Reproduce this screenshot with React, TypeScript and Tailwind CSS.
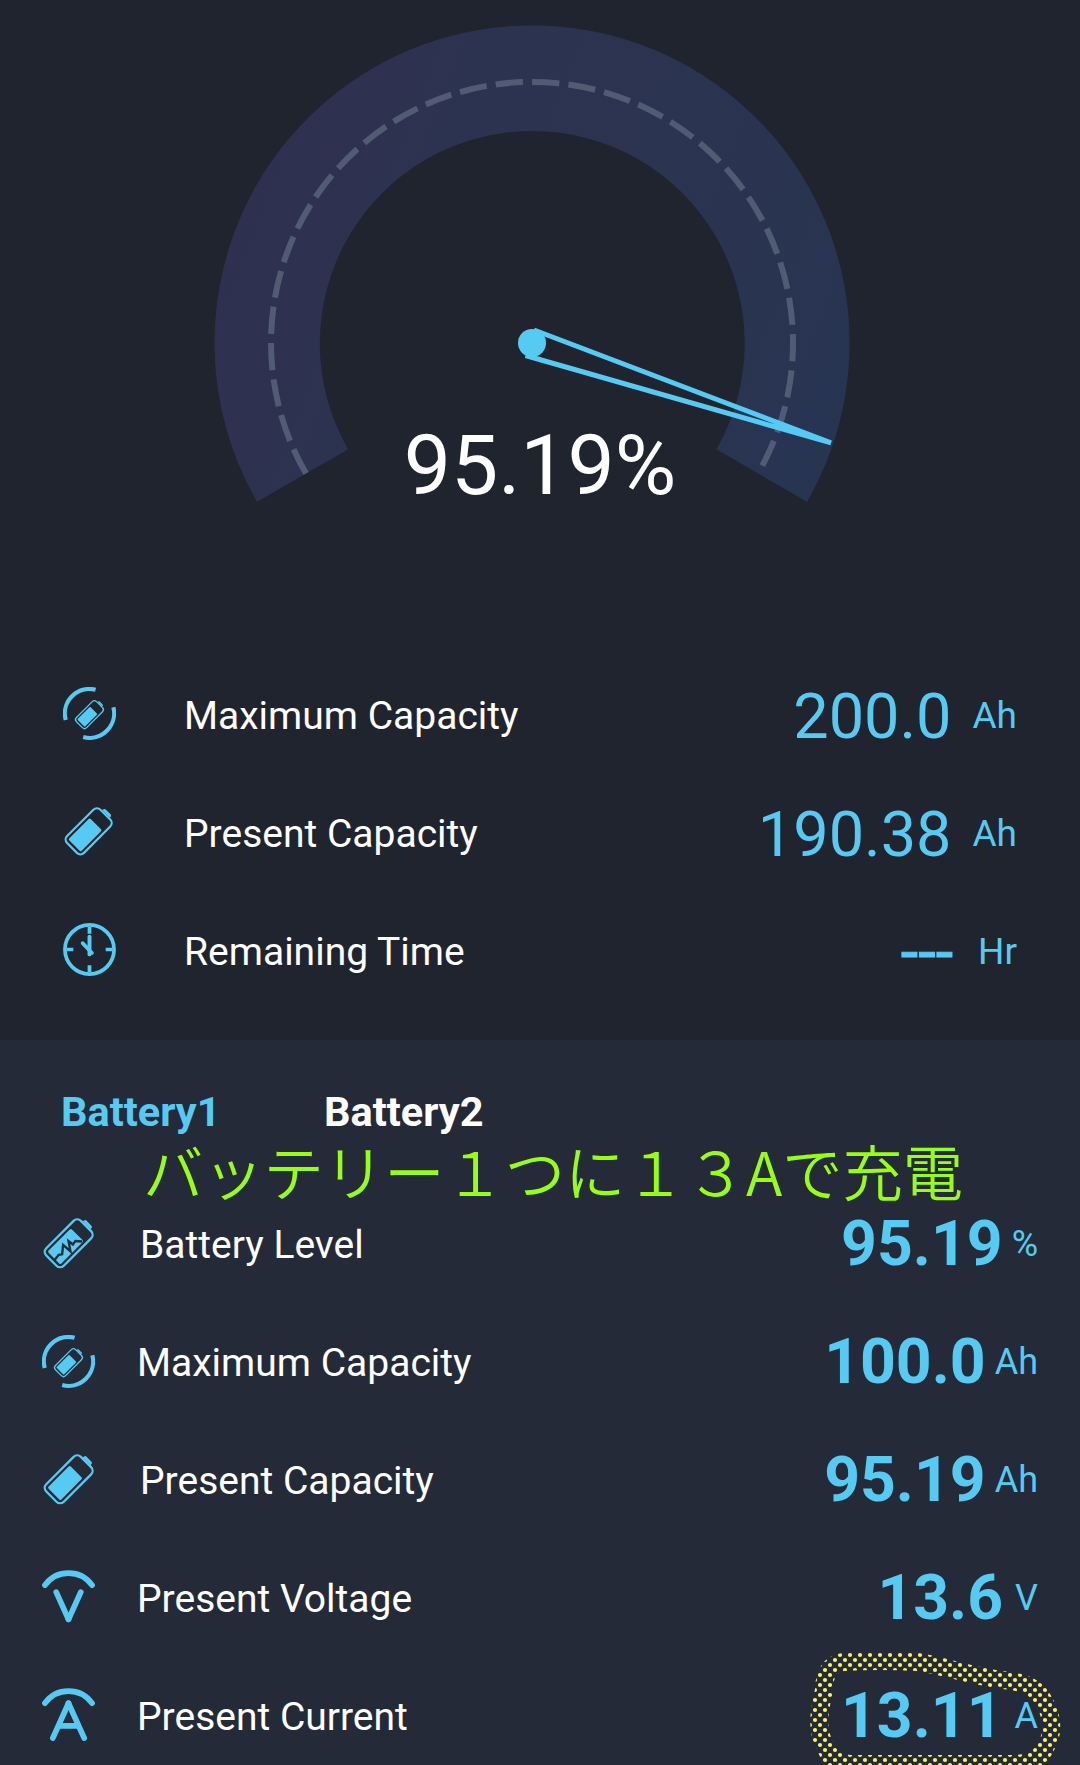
import React from 'react';

const BLUE = '#55cbf3';

function BatteryShape({ level = false }: { level?: boolean }) {
    return (
        <g transform="translate(27 27) rotate(45) scale(1.05)">
            <rect x="-12" y="-24" width="24" height="47.5" rx="5" fill="none" stroke={BLUE} strokeWidth="2.2" />
            <path d="M-5.5 -25 L-5 -27 Q-4.5 -28 -3.5 -28 H3.5 Q4.5 -28 5 -27 L5.5 -25 Z" fill={BLUE} />
            <rect x="-8.8" y={level ? -12 : -10.5} width="17.6" height={level ? 32 : 30.5} rx="1.5" fill={BLUE} />
        </g>
    );
}

function BatteryIcon({ size = 53 }: { size?: number }) {
    return (
        <svg width={size} height={size} viewBox="0 0 54 54">
            <BatteryShape />
        </svg>
    );
}

function BatteryLevelIcon() {
    return (
        <svg width="53" height="53" viewBox="0 0 54 54">
            <BatteryShape level />
            <path
                d="M13 43.5 L17 38.5 L20.5 38 L21.5 28.5 L29 35 L27 24.5 L31.5 28 L34 24.5 L41 25"
                fill="none"
                stroke="#242a37"
                strokeWidth="2.4"
            />
        </svg>
    );
}

function MaxCapacityIcon() {
    return (
        <svg width="53" height="53" viewBox="0 0 54 54" fill="none">
            <path d="M33.2 2.8 A25 25 0 0 0 2.8 33.6" stroke={BLUE} strokeWidth="4.2" />
            <path d="M51.3 20.7 A25 25 0 0 1 20.6 51" stroke={BLUE} strokeWidth="4.2" />
            <g transform="translate(11.2 12.6) scale(0.58)">
                <BatteryShape />
            </g>
        </svg>
    );
}

function ClockIcon() {
    return (
        <svg width="53" height="53" viewBox="0 0 54 54" fill="none" stroke={BLUE} strokeWidth="3.8">
            <circle cx="27" cy="27" r="25" />
            <path d="M27 4 V11 M27 43 V50 M4 27 H10.5 M43.5 27 H50" />
            <path d="M27 14 V32" strokeWidth="4" strokeLinecap="round" />
            <path d="M20 20.5 L29.5 30.5" strokeLinecap="round" />
        </svg>
    );
}

function VoltageIcon() {
    return (
        <svg width="53" height="53" viewBox="0 0 54 54" fill="none" stroke={BLUE} strokeWidth="5.8" strokeLinecap="round" className="-mt-[2px]">
            <path d="M3 15.5 A29.5 29.5 0 0 1 51 15.5" />
            <line x1="14.5" y1="22.5" x2="27" y2="50.3" />
            <line x1="39.5" y1="22.5" x2="27" y2="50.3" />
        </svg>
    );
}

function CurrentIcon() {
    return (
        <svg width="53" height="53" viewBox="0 0 54 54" fill="none" stroke={BLUE} strokeWidth="5.8" strokeLinecap="round" className="-mt-[2px]">
            <path d="M3 15.5 A29.5 29.5 0 0 1 51 15.5" />
            <line x1="27" y1="15.5" x2="11" y2="51" />
            <line x1="27" y1="15.5" x2="43" y2="51" />
            <line x1="18" y1="38.5" x2="36" y2="38.5" />
        </svg>
    );
}

function Gauge() {
    return (
        <div className="relative h-[654px]">
            <svg width="1080" height="560" viewBox="0 0 1080 560" fill="none" className="block">
                <defs>
                    <linearGradient id="arc" gradientUnits="userSpaceOnUse" x1="230" y1="200" x2="850" y2="440">
                        <stop offset="0" stopColor="#2f304f" />
                        <stop offset="0.12" stopColor="#2e314f" />
                        <stop offset="0.26" stopColor="#2c3350" />
                        <stop offset="0.75" stopColor="#2a3450" />
                        <stop offset="1" stopColor="#273552" />
                    </linearGradient>
                </defs>
                <path d="M257.1 501.7 A317.5 317.5 0 1 1 807 501.7 L716.5 449.3 A212.5 212.5 0 1 0 348 449.3 Z" fill="url(#arc)" />
                <path d="M306 473.5 A261 261 0 1 1 758 473.5" stroke="#515b74" strokeWidth="6" strokeDasharray="27.3 9.14" />
                <circle cx="532" cy="343" r="14" fill={BLUE} />
                <path d="M534 330 L831 442.8 L525.5 355.5" stroke={BLUE} strokeWidth="5" strokeLinejoin="bevel" />
            </svg>
            <div className="absolute inset-x-0 top-[416px] text-center text-[84px] leading-[100px] text-white">95.19%</div>
        </div>
    );
}

const summary = [
    { icon: <MaxCapacityIcon />, label: 'Maximum Capacity', value: '200.0', unit: 'Ah' },
    { icon: <BatteryIcon size={51} />, label: 'Present Capacity', value: '190.38', unit: 'Ah' },
    { icon: <ClockIcon />, label: 'Remaining Time', value: '---', unit: 'Hr' },
];

const details = [
    { icon: <BatteryLevelIcon />, label: 'Battery Level', value: '95.19', unit: '%', indent: true },
    { icon: <MaxCapacityIcon />, label: 'Maximum Capacity', value: '100.0', unit: 'Ah', indent: false },
    { icon: <BatteryIcon />, label: 'Present Capacity', value: '95.19', unit: 'Ah', indent: true },
    { icon: <VoltageIcon />, label: 'Present Voltage', value: '13.6', unit: 'V', indent: false },
    { icon: <CurrentIcon />, label: 'Present Current', value: '13.11', unit: 'A', indent: false },
];

export default function App() {
    return (
        <main className="relative h-[1765px] w-[1080px] overflow-hidden bg-[#20242e] font-['Roboto',sans-serif] text-white">
            <Gauge />

            <section className="h-[386px] pr-[63px] pl-[63px]">
                {summary.map((row) => (
                    <div key={row.label} className="flex h-[118px] items-center">
                        <div className="flex w-[53px]">{row.icon}</div>
                        <span className="ml-[68px] pt-[7px] text-[39px] leading-none">{row.label}</span>
                        <div className="ml-auto flex items-center text-[#55cbf3]">
                            <span className={`pt-[7px] text-[63px] leading-none ${row.value === '---' ? 'pr-1 [-webkit-text-stroke:1px_#55cbf3]' : ''}`}>
                                {row.value}
                            </span>
                            <span className="ml-[21px] pt-[5px] text-[37px] leading-none">{row.unit}</span>
                        </div>
                    </div>
                ))}
            </section>

            <section className="h-[725px] bg-[#242a37]">
                <div className="flex h-36 items-start pt-[51px] pl-[61px] text-[41.5px] leading-[42px] font-bold">
                    <span className="w-[263px] text-[#55cbf3]">Battery1</span>
                    <span>Battery2</span>
                </div>
                {details.map((row) => (
                    <div key={row.label} className="flex h-[118px] items-center pr-[42px] pl-[42px]">
                        {row.icon}
                        <span className={`pt-1 text-[39px] leading-none ${row.indent ? 'ml-[45px]' : 'ml-[42px]'}`}>{row.label}</span>
                        <div className="ml-auto flex items-center text-[#55cbf3]">
                            <span className="pt-[2px] text-[62.5px] leading-none font-bold">{row.value}</span>
                            <span className={`pt-[2px] text-[36px] leading-none ${row.unit === 'V' || row.unit === 'A' ? 'ml-3' : 'ml-[9px]'}`}>
                                {row.unit}
                            </span>
                        </div>
                    </div>
                ))}
            </section>

            {/* marker notes laid over the readings */}
            <p className="absolute top-[1140px] left-[143px] font-['Noto_Sans_CJK_JP',sans-serif] text-[60.3px] leading-[60px] font-[350] whitespace-nowrap text-[#99ff11]">
                バッテリー１つに１３Aで充電
            </p>
            <svg className="absolute top-[1640px] left-[800px]" width="280" height="125" viewBox="800 1640 280 125" fill="none">
                <defs>
                    <pattern id="dots" patternUnits="userSpaceOnUse" x="845" y="1650" width="10" height="10">
                        <circle cx="5" cy="5" r="2.1" fill="#fbf55c" />
                        <circle cx="0" cy="0" r="2.1" fill="#fbf55c" />
                        <circle cx="10" cy="0" r="2.1" fill="#fbf55c" />
                        <circle cx="0" cy="10" r="2.1" fill="#fbf55c" />
                        <circle cx="10" cy="10" r="2.1" fill="#fbf55c" />
                    </pattern>
                </defs>
                <path
                    d="M843 1662 Q880 1660 918 1662 C945 1666 970 1676 1003 1680 Q1030 1682 1040 1695 C1054 1715 1054 1735 1045 1748 Q1038 1763 1015 1764 H850 Q830 1763 825 1745 C816 1730 819 1712 824 1690 Q824 1665 843 1662 Z"
                    stroke="url(#dots)"
                    strokeWidth="18"
                />
            </svg>
        </main>
    );
}
